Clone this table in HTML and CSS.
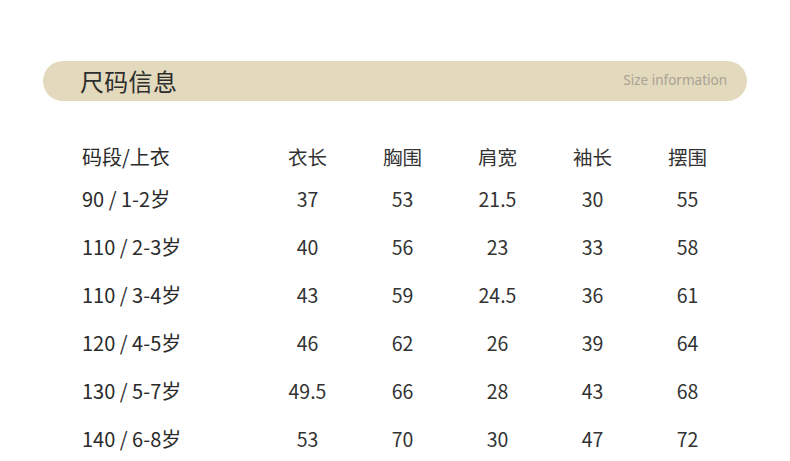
FILE: index.html
```html
<!DOCTYPE html>
<html lang="zh">
<head>
<meta charset="utf-8">
<title>尺码信息</title>
<link rel="stylesheet" href="styles.css">
</head>
<body>
<div class="page">
  <div class="banner">
    <span class="banner-title">尺码信息</span>
    <span class="banner-sub">Size information</span>
  </div>
  <div class="table">
    <div class="row head">
      <div class="cell label">码段/上衣</div>
      <div class="cell">衣长</div>
      <div class="cell">胸围</div>
      <div class="cell">肩宽</div>
      <div class="cell">袖长</div>
      <div class="cell">摆围</div>
    </div>
    <div class="row">
      <div class="cell label">90 / 1-2岁</div>
      <div class="cell">37</div><div class="cell">53</div><div class="cell">21.5</div><div class="cell">30</div><div class="cell">55</div>
    </div>
    <div class="row">
      <div class="cell label">110 / 2-3岁</div>
      <div class="cell">40</div><div class="cell">56</div><div class="cell">23</div><div class="cell">33</div><div class="cell">58</div>
    </div>
    <div class="row">
      <div class="cell label">110 / 3-4岁</div>
      <div class="cell">43</div><div class="cell">59</div><div class="cell">24.5</div><div class="cell">36</div><div class="cell">61</div>
    </div>
    <div class="row">
      <div class="cell label">120 / 4-5岁</div>
      <div class="cell">46</div><div class="cell">62</div><div class="cell">26</div><div class="cell">39</div><div class="cell">64</div>
    </div>
    <div class="row">
      <div class="cell label">130 / 5-7岁</div>
      <div class="cell">49.5</div><div class="cell">66</div><div class="cell">28</div><div class="cell">43</div><div class="cell">68</div>
    </div>
    <div class="row">
      <div class="cell label">140 / 6-8岁</div>
      <div class="cell">53</div><div class="cell">70</div><div class="cell">30</div><div class="cell">47</div><div class="cell">72</div>
    </div>
  </div>
</div>
</body>
</html>
```
FILE: styles.css
```css
html, body {
  margin: 0;
  padding: 0;
  background: #ffffff;
}
body {
  font-family: "Noto Sans CJK SC", "Noto Sans", sans-serif;
  color: #333333;
  overflow: hidden;
}
.page {
  width: 790px;
  height: 461px;
  padding-top: 61px;
  box-sizing: border-box;
}
.banner {
  margin: 0 43px;
  height: 40px;
  border-radius: 20px;
  background: #e3d9bd;
  display: flex;
  align-items: center;
  justify-content: space-between;
  padding: 0 20px 0 37px;
  box-sizing: border-box;
}
.banner-title {
  font-size: 24px;
  line-height: 1;
  color: #2e2e2e;
  letter-spacing: 0.3px;
}
.banner-sub {
  font-family: "Noto Sans", sans-serif;
  font-size: 13.5px;
  line-height: 1;
  color: #a9a292;
}
.table {
  margin: 38px 0 0 82px;
}
.row {
  display: grid;
  grid-template-columns: 178px repeat(5, 95px);
  height: 48px;
  align-items: center;
  font-size: 19.5px;
  line-height: 1;
}
.row.head {
  height: 36px;
}
.cell {
  text-align: center;
}
.cell.label {
  text-align: left;
  font-size: 20px;
  color: #2b2b2b;
}
```
